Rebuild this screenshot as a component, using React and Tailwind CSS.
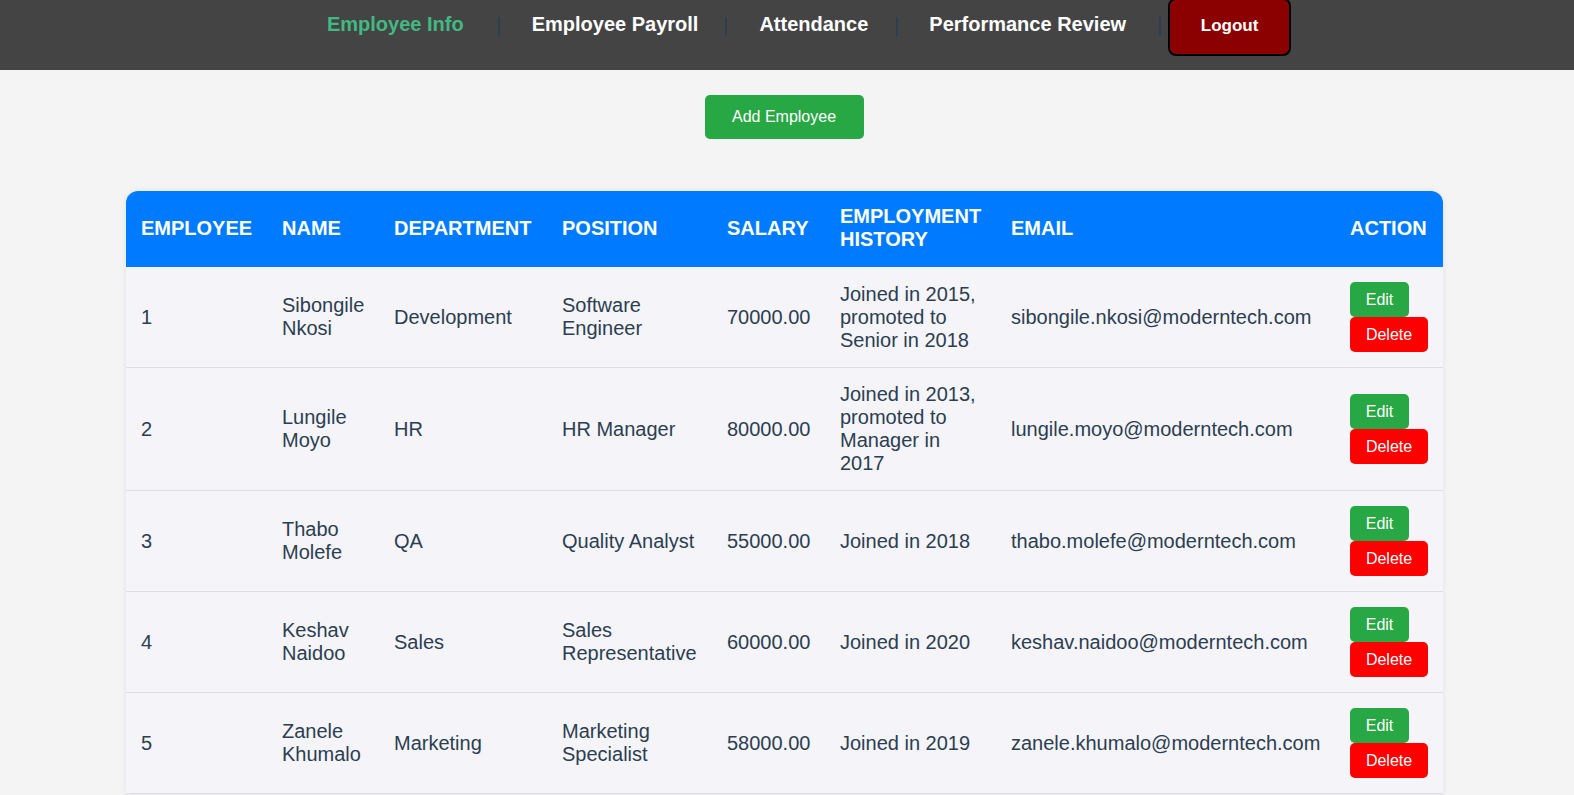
import React from "react";

const rows = [
  { id: 1, name: "Sibongile Nkosi", dept: "Development", pos: "Software Engineer", salary: "70000.00", hist: "Joined in 2015, promoted to Senior in 2018", email: "sibongile.nkosi@moderntech.com" },
  { id: 2, name: "Lungile Moyo", dept: "HR", pos: "HR Manager", salary: "80000.00", hist: "Joined in 2013, promoted to Manager in 2017", email: "lungile.moyo@moderntech.com" },
  { id: 3, name: "Thabo Molefe", dept: "QA", pos: "Quality Analyst", salary: "55000.00", hist: "Joined in 2018", email: "thabo.molefe@moderntech.com" },
  { id: 4, name: "Keshav Naidoo", dept: "Sales", pos: "Sales Representative", salary: "60000.00", hist: "Joined in 2020", email: "keshav.naidoo@moderntech.com" },
  { id: 5, name: "Zanele Khumalo", dept: "Marketing", pos: "Marketing Specialist", salary: "58000.00", hist: "Joined in 2019", email: "zanele.khumalo@moderntech.com" },
];

const Sep = ({ ml, mr }) => (
  <div className={`w-[2px] h-[19px] bg-[#2c3e50] mt-[17px] ${ml} ${mr}`} />
);

export default function App() {
  return (
    <div className="min-h-[795px] bg-[#f4f4f4] font-['Liberation_Sans',Arial,sans-serif] text-[#2c3e50]">
      <nav className="h-[70px] bg-[#444444] flex justify-center items-start pl-[44px]">
        <a className="text-[20px] leading-[23px] font-bold text-[#42b983] mt-[13px]">Employee Info</a>
        <Sep ml="ml-[34px]" mr="mr-[32px]" />
        <a className="text-[20px] leading-[23px] font-bold text-white mt-[13px]">Employee Payroll</a>
        <Sep ml="ml-[27px]" mr="mr-[32px]" />
        <a className="text-[20px] leading-[23px] font-bold text-white mt-[13px]">Attendance</a>
        <Sep ml="ml-[28px]" mr="mr-[31px]" />
        <a className="text-[20px] leading-[23px] font-bold text-white mt-[13px]">Performance Review</a>
        <Sep ml="ml-[33px]" mr="mr-[7px]" />
        <button className="w-[123px] h-[58px] -mt-[2px] bg-[#8b0000] border-2 border-black rounded-[8px] text-white font-bold text-[17px] pb-[2px]">
          Logout
        </button>
      </nav>

      <div className="flex justify-center pt-[25px] pr-[6px]">
        <button className="w-[159px] h-[44px] bg-[#28a745] rounded-[5px] text-white text-[16px]">Add Employee</button>
      </div>

      <div className="pt-[52px] pl-[126px]">
        <table className="w-[1317px] table-fixed border-collapse rounded-t-[12px] overflow-hidden shadow-[0_0_6px_rgba(0,0,0,0.08)] text-[20px] leading-[23px]">
          <colgroup>
            <col className="w-[141px]" />
            <col className="w-[112px]" />
            <col className="w-[168px]" />
            <col className="w-[165px]" />
            <col className="w-[113px]" />
            <col className="w-[171px]" />
            <col className="w-[339px]" />
            <col className="w-[108px]" />
          </colgroup>
          <thead>
            <tr className="bg-[#007bff] text-white uppercase text-left">
              {["Employee", "Name", "Department", "Position", "Salary", "Employment History", "Email", "Action"].map((h) => (
                <th key={h} className="pt-[14px] pb-[16px] px-[15px] font-bold align-middle h-[76px]">{h}</th>
              ))}
            </tr>
          </thead>
          <tbody>
            {rows.map((r) => (
              <tr key={r.id} className="bg-[#f4f4f9] border-b border-[#dddde2]">
                <td className="pt-[15px] pb-[15px] px-[15px] align-middle">{r.id}</td>
                <td className="p-[15px] align-middle">{r.name}</td>
                <td className="p-[15px] align-middle">{r.dept}</td>
                <td className="p-[15px] align-middle">{r.pos}</td>
                <td className="p-[15px] align-middle">{r.salary}</td>
                <td className="p-[15px] align-middle">{r.hist}</td>
                <td className="p-[15px] align-middle">{r.email}</td>
                <td className="p-[15px] align-middle">
                  <div className="flex flex-col items-start">
                    <button className="h-[35px] w-[59px] bg-[#28a745] text-white text-[16px] rounded-[5px]">Edit</button>
                    <button className="h-[35px] w-[78px] bg-[#ff0000] text-white text-[16px] rounded-[5px]">Delete</button>
                  </div>
                </td>
              </tr>
            ))}
          </tbody>
        </table>
      </div>
    </div>
  );
}
